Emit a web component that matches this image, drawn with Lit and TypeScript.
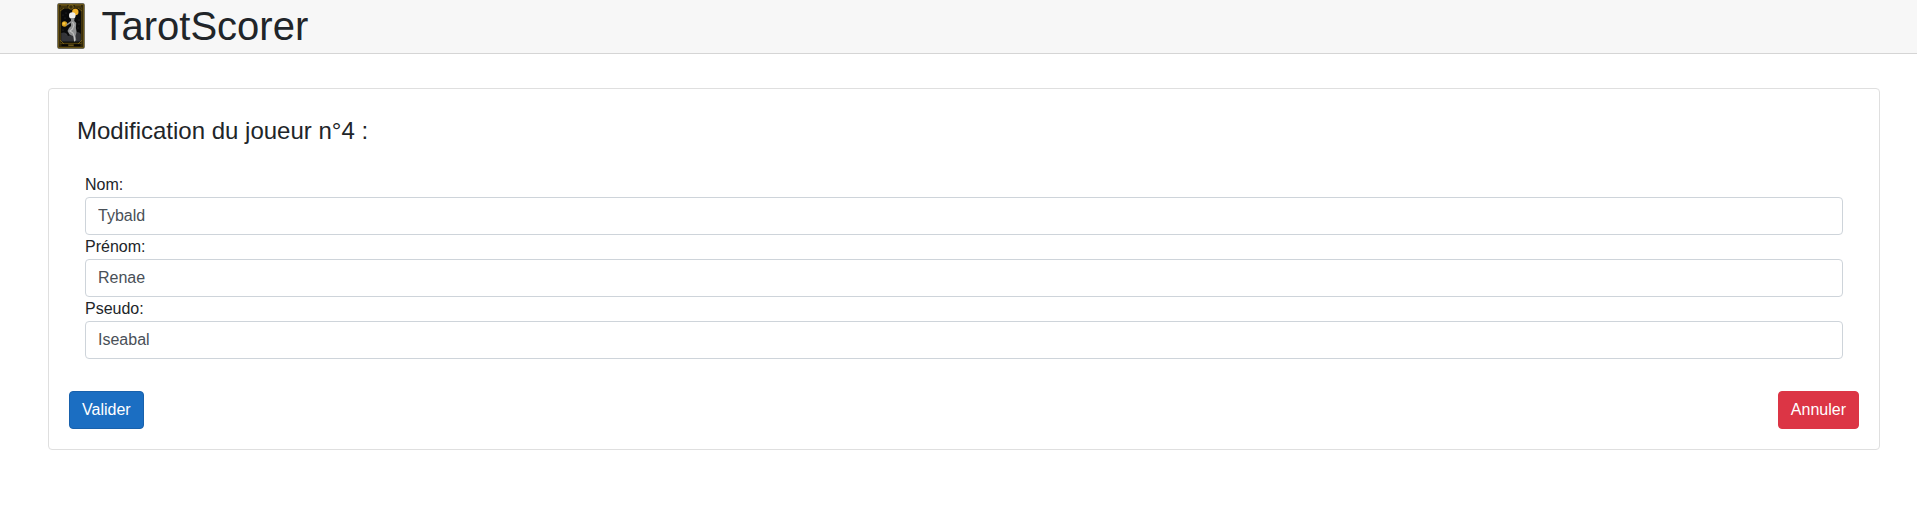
import { LitElement, html, css, svg } from "lit";
import { customElement, property } from "lit/decorators.js";

@customElement("tarot-logo")
class TarotLogo extends LitElement {
  static styles = css`
    :host { display: block; width: 28px; height: 46px; }
    .card { display: block; width: 100%; height: 100%; }
  `;
  render() {
    const stars = [[6, 12], [9, 10], [22, 17], [6, 27], [8, 15], [21, 25], [22, 21], [9, 31]];
    return html`<svg class="card" viewBox="0 0 28 46" aria-hidden="true">
      <rect x=".3" y=".3" width="27.4" height="45.4" rx="1.6" fill="#3b3828"/>
      <rect x="1.5" y="1.5" width="25" height="43" fill="#30270b" stroke="#6d5818" stroke-width=".9"/>
      <rect x="3.2" y="5" width="21.6" height="35.5" fill="#1b170a" stroke="#59480f" stroke-width=".8"/>
      <path d="M4.2 39V10Q4.5 6 9 6H19Q23.5 6 23.8 10V39Z" fill="#090a0b"/>
      <path d="M4.2 30Q9 28 11 33L17 31Q21 27 23.8 31V38.5H4.2Z" fill="#333438"/>
      <path d="M4 2.8H10M18 2.8H24M3 8L7 5M25 8L21 5M3 37L7 41M25 37L21 41" stroke="#80661b" stroke-width=".8"/>
      <circle cx="14" cy="4" r="2.3" fill="#372c0c" stroke="#8c721f" stroke-width=".8"/>
      <path d="M4.5 42.3H11M17 42.3H23.5" stroke="#080704" stroke-width="2"/>
      <path d="M11.5 42.3H16.5" stroke="#67531a" stroke-width="1.4"/>
      ${stars.map(([x, y]) => svg`<circle cx=${x} cy=${y} r=".4" fill="#666"/>`)}
      <circle cx="18.3" cy="9" r="3.2" fill="#efb027"/>
      <circle cx="7.5" cy="21" r="2.7" fill="#d5a020"/>
      <circle cx="7" cy="20.5" r="1.2" fill="#ffc93c"/>
      <circle cx="15.3" cy="12.5" r="3.3" fill="#eeeeeb"/>
      <path d="M14 15L17.5 15.2L17.2 18L19.2 20L18.9 25L19.6 29L18.5 33L19.2 37L17.3 39L16 33L12.5 31.5L10.5 28L12 25L14 23L14 20L10 22.5L9 21.5L14 18Z" fill="#8e9091"/>
      <path d="M15.5 19L17 22L15.5 26L13 28L16 30L17.5 34V38" fill="none" stroke="#c1c2c2" stroke-width="1.1"/>
    </svg>`;
  }
}

@customElement("labelled-field")
class LabelledField extends LitElement {
  @property() label = "";
  @property() value = "";
  static styles = css`
    :host { display: block; }
    .label { display: block; height: 24px; line-height: 24px; color: #212529; }
    .input {
      display: block; box-sizing: border-box; width: 100%; height: 38px;
      padding: 6px 12px; border: 1px solid #ced4da; border-radius: 4px;
      background: #fff; color: #495057; font: inherit; line-height: 24px; outline: none;
    }
  `;
  render() {
    return html`<label class="label" for="field">${this.label}</label>
      <input class="input" id="field" type="text" .value=${this.value} />`;
  }
}

@customElement("app-root")
class AppRoot extends LitElement {
  static styles = css`
    :host {
      display: block; min-height: 508px; background: #fff; color: #212529;
      font: 16px/24px "Liberation Sans", Arial, sans-serif;
    }
    .header {
      display: flex; align-items: flex-start; box-sizing: border-box; height: 54px;
      padding: 3px 56.5px 0; background: #f7f7f7; border-bottom: 1px solid #d5d5d5;
    }
    .brand { margin: -1px 0 0 17px; font-size: 40px; line-height: 48px; font-weight: 400; }
    .panel {
      box-sizing: border-box; height: 362px; margin: 34px 37px 0 48px; padding: 20px;
      border: 1px solid #dfdfdf; border-radius: 4px;
      display: flex; flex-direction: column; justify-content: space-between;
    }
    .title { margin: 7px 8px 28px; font-size: 24px; line-height: 29px; font-weight: 400; }
    .fields { padding: 0 16px; }
    .actions { display: flex; justify-content: space-between; }
    .button {
      box-sizing: border-box; height: 38px; padding: 6px 12px; border: 1px solid;
      border-radius: 4px; color: #fff; font: inherit; line-height: 24px;
    }
    .confirm { background: #1b6ec2; border-color: #1861ac; }
    .cancel { background: #dc3545; border-color: #dc3545; }
  `;
  render() {
    return html`
      <header class="header"><tarot-logo></tarot-logo><h1 class="brand">TarotScorer</h1></header>
      <main class="panel">
        <section>
          <h4 class="title">Modification du joueur n°4 :</h4>
          <div class="fields">
            <labelled-field label="Nom:" value="Tybald"></labelled-field>
            <labelled-field label="Prénom:" value="Renae"></labelled-field>
            <labelled-field label="Pseudo:" value="Iseabal"></labelled-field>
          </div>
        </section>
        <div class="actions">
          <button class="button confirm">Valider</button>
          <button class="button cancel">Annuler</button>
        </div>
      </main>`;
  }
}
